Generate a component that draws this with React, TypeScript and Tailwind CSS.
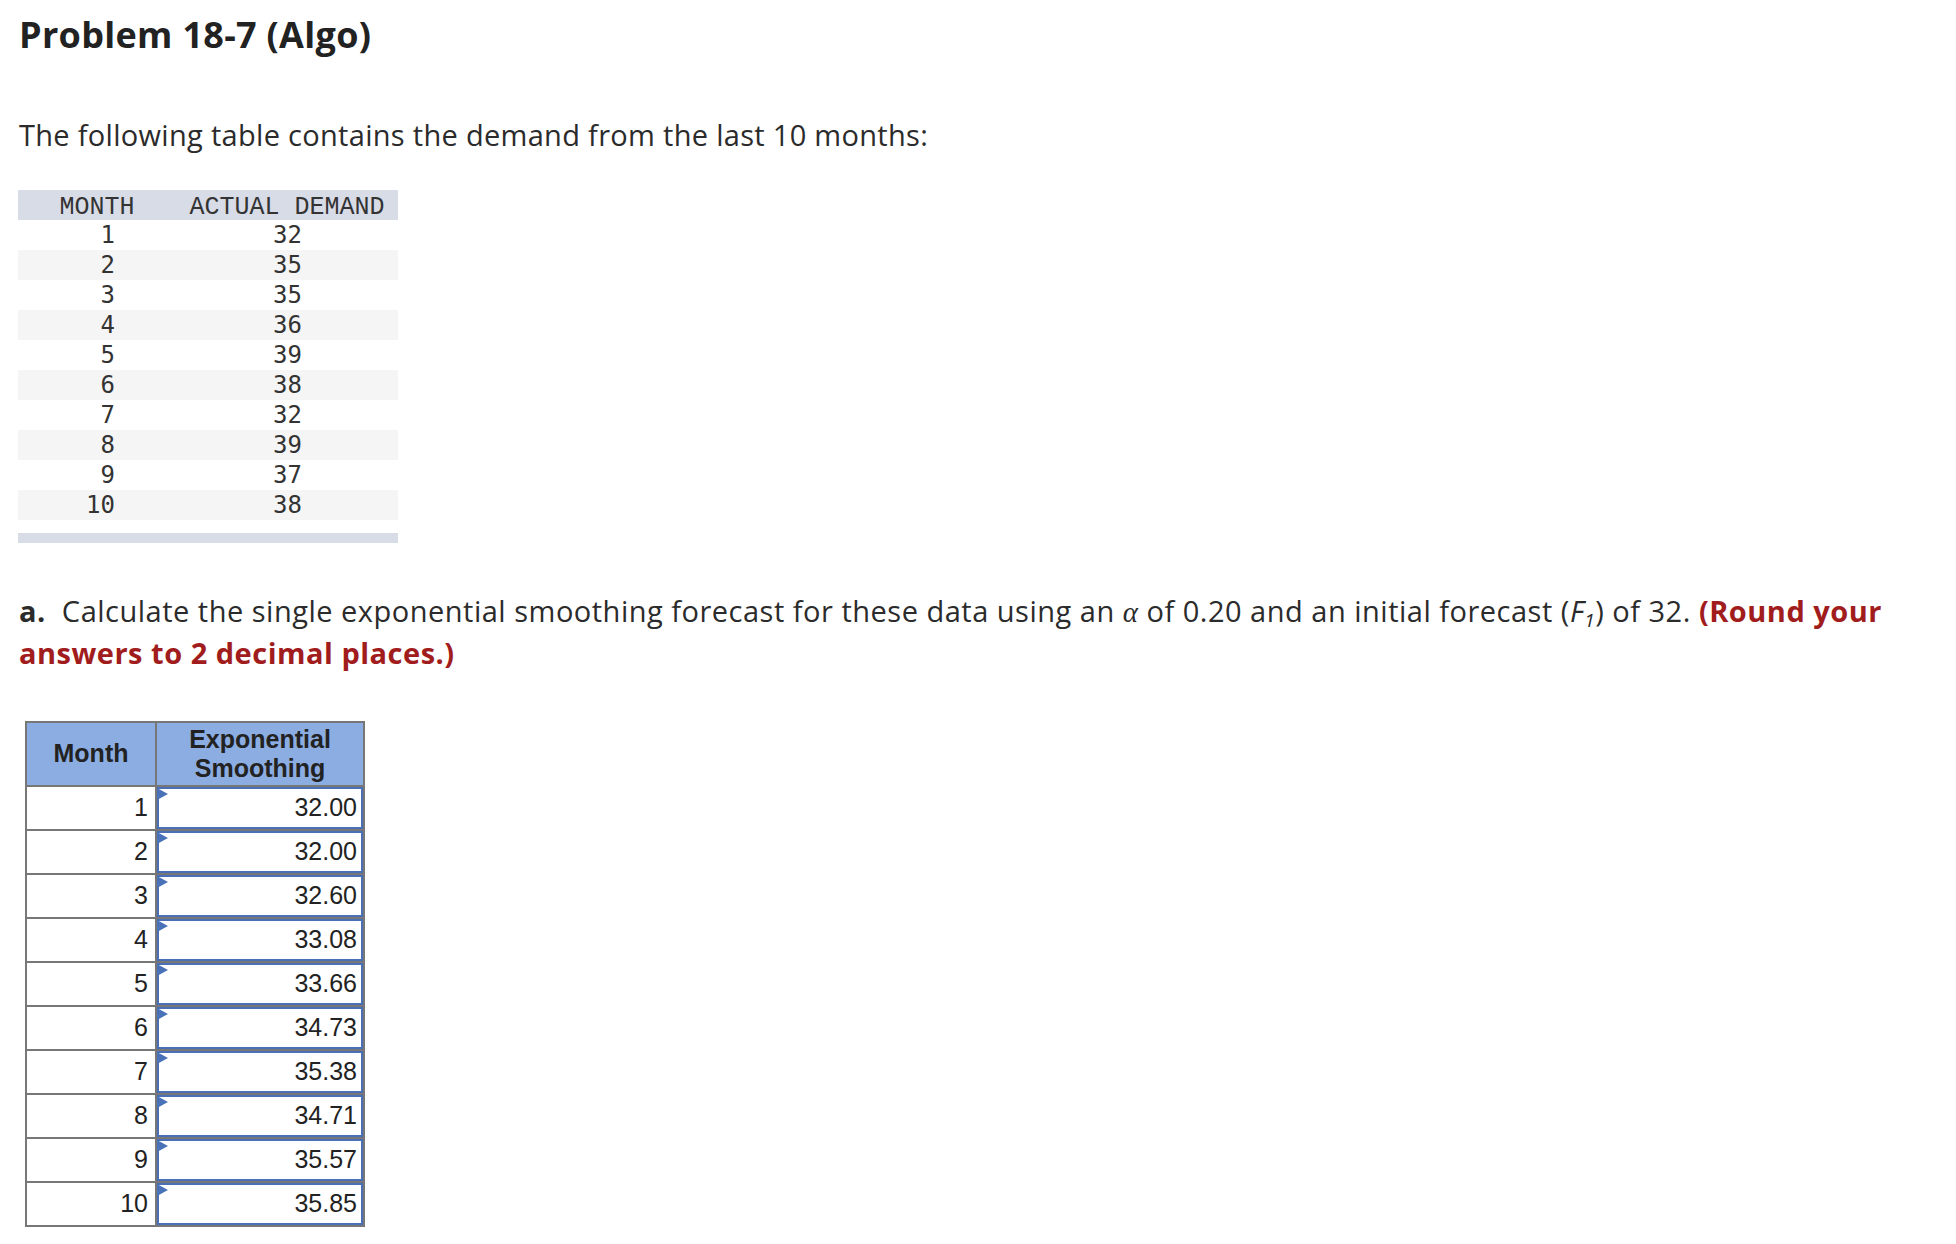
import React from 'react'

const demand = [
  { month: 1, value: 32 },
  { month: 2, value: 35 },
  { month: 3, value: 35 },
  { month: 4, value: 36 },
  { month: 5, value: 39 },
  { month: 6, value: 38 },
  { month: 7, value: 32 },
  { month: 8, value: 39 },
  { month: 9, value: 37 },
  { month: 10, value: 38 },
]

const forecasts = ['32.00', '32.00', '32.60', '33.08', '33.66', '34.73', '35.38', '34.71', '35.57', '35.85']

function DemandTable() {
  return (
    <div className="mt-[37px] -ml-px w-[380px]">
      <div className="flex h-[30px] items-center bg-[#d8dce7] pt-[5px] font-['Liberation_Mono',monospace] text-[25px] leading-[30px] text-[#333]">
        <div className="w-[158px] text-center">MONTH</div>
        <div className="flex-1 text-center">ACTUAL DEMAND</div>
      </div>
      {demand.map((row, i) => (
        <div
          key={row.month}
          className={
            'flex h-[30px] items-center font-["DejaVu_Sans_Mono",monospace] text-[24px] leading-[30px] text-[#333] ' +
            (i % 2 === 1 ? 'bg-[#f5f5f5]' : 'bg-white')
          }
        >
          <div className="w-[158px] pr-[61px] text-right">{row.month}</div>
          <div className="flex-1 pr-[96px] text-right">{row.value}</div>
        </div>
      ))}
      <div className="mt-[13px] h-[10px] bg-[#d8dce7]" />
    </div>
  )
}

function ForecastTable() {
  return (
    <div className="mt-[48px] ml-[6px] w-[340px] border-l-2 border-t-2 border-[#777] font-['Liberation_Sans',Arial,sans-serif] text-[#222]">
      <div className="flex h-[64px] bg-[#8badE2]">
        <div className="flex w-[130px] items-center justify-center border-b-2 border-r-2 border-[#777] text-[25px] font-bold">
          Month
        </div>
        <div className="flex w-[208px] items-center justify-center border-b-2 border-r-2 border-[#777] text-center text-[25px] font-bold leading-[29px]">
          Exponential
          <br />
          Smoothing
        </div>
      </div>
      {forecasts.map((f, i) => (
        <div key={i} className="flex h-[44px]">
          <div className="flex w-[130px] items-center justify-end border-b-2 border-r-2 border-[#777] bg-white pr-[7px] text-[25px]">
            {i + 1}
          </div>
          <div className="relative w-[208px] border-b-2 border-r-2 border-[#777] bg-white">
            <div className="flex h-full items-center justify-end border-2 border-[#4a6fb6] pr-[4px] text-[25px]">
              {f}
            </div>
            <svg className="absolute left-0 top-[1px] h-[12px] w-[11px]" viewBox="0 0 11 12">
              <path d="M0 0 L11 6 L0 12 Z" fill="#4a72b8" />
            </svg>
          </div>
        </div>
      ))}
    </div>
  )
}

export default function App() {
  return (
    <div className="min-h-screen bg-white px-[19px] pt-[13px] font-['Open_Sans','Lato',sans-serif] text-[#2b2b2b]">
      <h1 className="text-[36px] font-bold leading-[44px] tracking-[0.3px] text-[#222]">Problem 18-7 (Algo)</h1>

      <p className="mt-[60px] text-[29px] leading-[36px] tracking-[0.3px]">
        The following table contains the demand from the last 10 months:
      </p>

      <DemandTable />

      <p className="mt-[48px] text-[29px] leading-[40px] tracking-[0.5px]">
        <span className="font-bold">a.</span>&nbsp; Calculate the single exponential smoothing forecast for these data
        using an <i className="font-serif">α</i> of 0.20 and an initial forecast (<i>F</i>
        <sub className="text-[19px] italic">1</sub>) of 32.{' '}
        <span className="font-bold text-[#a11c1c]">
          (Round your
          <br />
          answers to 2 decimal places.)
        </span>
      </p>

      <ForecastTable />
    </div>
  )
}
